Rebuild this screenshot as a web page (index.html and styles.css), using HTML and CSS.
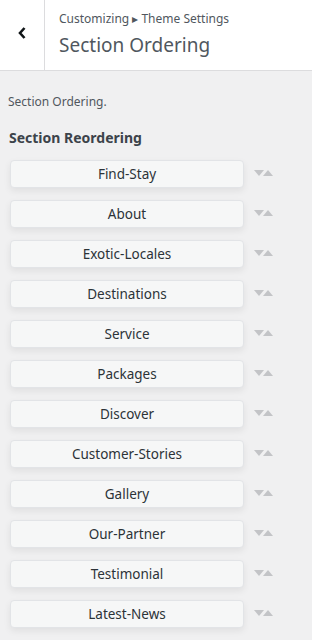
FILE: index.html
```html
<!DOCTYPE html>
<html lang="en">
<head>
  <meta charset="UTF-8" />
  <meta name="viewport" content="width=device-width, initial-scale=1" />
  <title>Section Ordering</title>
  <link rel="stylesheet" href="styles.css">
</head>
<body>
  <div class="header">
    <button class="back" aria-label="Back">
      <svg width="10" height="14" viewBox="0 0 10 14"><path d="M7.5 2 L3 7 L7.5 12" fill="none" stroke="#101517" stroke-width="2.6"/></svg>
    </button>
    <div class="title">
      <div class="crumb">Customizing &#9656; Theme Settings</div>
      <h1>Section Ordering</h1>
    </div>
  </div>

  <div class="content">
    <p class="desc">Section Ordering.</p>
    <h2>Section Reordering</h2>
    <ul class="sections">
      <li><span class="item">Find-Stay</span><span class="arrows"><i class="down"></i><i class="up"></i></span></li>
      <li><span class="item">About</span><span class="arrows"><i class="down"></i><i class="up"></i></span></li>
      <li><span class="item">Exotic-Locales</span><span class="arrows"><i class="down"></i><i class="up"></i></span></li>
      <li><span class="item">Destinations</span><span class="arrows"><i class="down"></i><i class="up"></i></span></li>
      <li><span class="item">Service</span><span class="arrows"><i class="down"></i><i class="up"></i></span></li>
      <li><span class="item">Packages</span><span class="arrows"><i class="down"></i><i class="up"></i></span></li>
      <li><span class="item">Discover</span><span class="arrows"><i class="down"></i><i class="up"></i></span></li>
      <li><span class="item">Customer-Stories</span><span class="arrows"><i class="down"></i><i class="up"></i></span></li>
      <li><span class="item">Gallery</span><span class="arrows"><i class="down"></i><i class="up"></i></span></li>
      <li><span class="item">Our-Partner</span><span class="arrows"><i class="down"></i><i class="up"></i></span></li>
      <li><span class="item">Testimonial</span><span class="arrows"><i class="down"></i><i class="up"></i></span></li>
      <li><span class="item">Latest-News</span><span class="arrows"><i class="down"></i><i class="up"></i></span></li>
    </ul>
  </div>
</body>
</html>
```

FILE: styles.css
```css
body {
  font-family: "Noto Sans", sans-serif;
  background: #f0f0f1;
  color: #50575e;
  margin: 0;
}
.header {
  display: flex;
  height: 70px;
  background: white;
  border-bottom: 1px solid #dcdcde;
}
.back {
  width: 45px;
  border: none;
  border-right: 1px solid #dcdcde;
  background: white;
  padding: 0 0 4px 0;
  display: flex;
  align-items: center;
  justify-content: center;
}
.title {
  padding: 10px 0 0 14px;
}
.crumb {
  font-size: 12px;
  line-height: 18px;
}
h1 {
  margin: 0;
  font-size: 19px;
  font-weight: normal;
  line-height: 34px;
}
.content {
  padding: 0 10px;
}
.desc {
  font-size: 12px;
  margin: 23px 0 0 -2px;
  line-height: 16px;
}
h2 {
  font-size: 14px;
  margin: 18px 0 0 -1px;
  line-height: 20px;
  color: #3c434a;
}
.sections {
  list-style: none;
  margin: 12px 0 0 0;
  padding: 0;
}
.sections li {
  display: flex;
  align-items: center;
  margin-bottom: 12px;
}
.item {
  width: 232px;
  height: 26px;
  line-height: 27px;
  text-align: center;
  font-size: 13.5px;
  color: #2c3338;
  background: #f6f7f7;
  border: 1px solid #e2e4e7;
  border-radius: 4px;
  box-shadow: 0 3px 7px rgba(0, 0, 0, 0.07);
}
.arrows {
  display: flex;
  margin-left: 10px;
  margin-top: -3px;
}
.arrows i {
  width: 0;
  height: 0;
  border-left: 5px solid transparent;
  border-right: 5px solid transparent;
}
.down {
  border-top: 6px solid #c3c4c7;
}
.up {
  border-bottom: 6px solid #c3c4c7;
  margin-left: -1px;
}
```
